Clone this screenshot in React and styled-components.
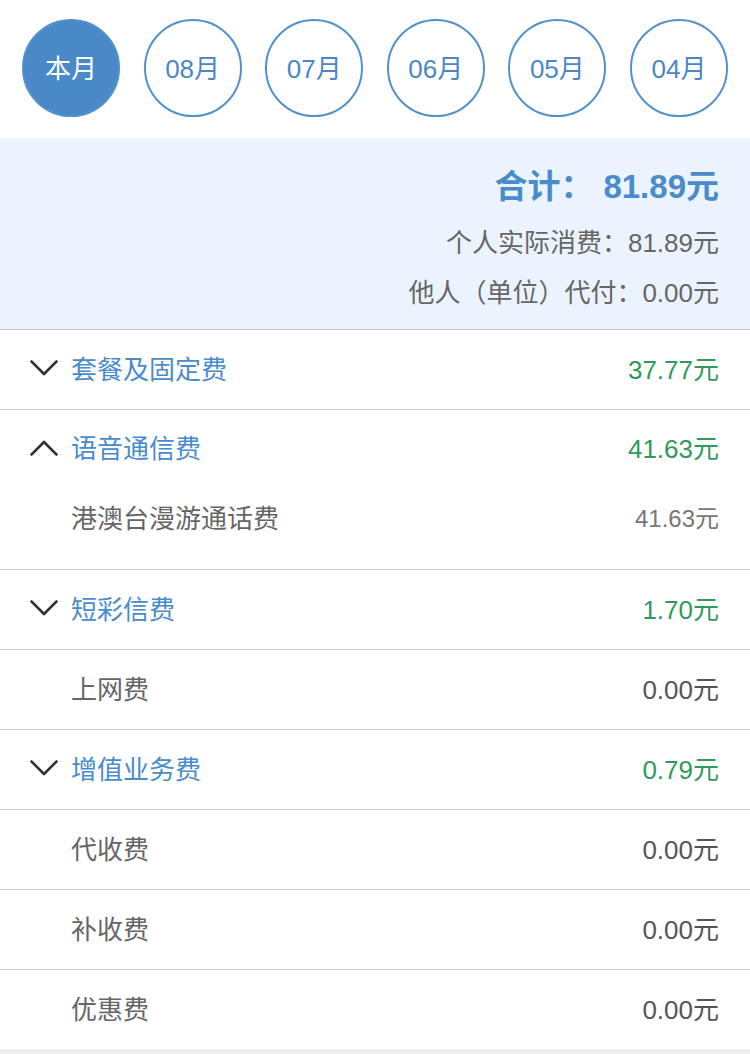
import React from "react";
import styled, { createGlobalStyle } from "styled-components";

const Global = createGlobalStyle`
  html, body { margin: 0; padding: 0; background: #efefef; }
  body { font-family: "Liberation Sans", "Noto Sans CJK SC", sans-serif; }
  * { box-sizing: border-box; }
`;

const Page = styled.div`
  width: 750px;
  background: #efefef;
`;

const MonthBar = styled.div`
  background: #fff;
  height: 138px;
  padding: 19px 22px 0 22px;
  display: flex;
  justify-content: space-between;
`;

const MonthCircle = styled.div`
  width: 98px;
  height: 98px;
  flex: 0 0 98px;
  border-radius: 50%;
  border: 2px solid #5291cc;
  background: ${(p) => (p.$active ? "#4a89c8" : "#fff")};
  color: ${(p) => (p.$active ? "#fff" : "#4a87c4")};
  display: flex;
  align-items: center;
  justify-content: center;
  font-size: 26px;
  padding-bottom: 3px;
`;

const Summary = styled.div`
  background: #ebf4fe;
  height: 192px;
  border-bottom: 1px solid #c9c9c9;
  padding: 26px 31px 0 0;
  display: flex;
  flex-direction: column;
  align-items: flex-end;
`;

const Total = styled.div`
  color: #4a8bcb;
  font-size: 33px;
  font-weight: bold;
  height: 46px;
  line-height: 46px;
`;

const Colon = styled.span`
  margin-right: 10px;
`;

const SumLine = styled.div`
  color: #666;
  font-size: 26px;
  height: 50px;
  line-height: 50px;
  margin-top: ${(p) => (p.$first ? "8px" : "0")};
`;

const List = styled.div`
  background: #fff;
`;

const Group = styled.div`
  border-bottom: ${(p) => (p.$last ? "none" : "1px solid #c9c9c9")};
`;

const HeaderRow = styled.div`
  height: ${(p) => (p.$open ? "78px" : "79px")};
  display: flex;
  align-items: center;
  padding: 0 31px 5px 30px;
`;

const Chevron = styled.svg`
  width: 28px;
  height: 16px;
  flex: 0 0 28px;
  margin-right: 13px;
  margin-top: 2px;
`;

const HeaderLabel = styled.div`
  flex: 1;
  color: #4a8bcb;
  font-size: 26px;
`;

const HeaderValue = styled.div`
  color: #2f9a5c;
  font-size: 26px;
`;

const SubList = styled.div`
  padding-bottom: 21px;
`;

const SubRow = styled.div`
  height: ${(p) => (p.$tall ? "79px" : "60px")};
  display: flex;
  align-items: center;
  padding: 0 31px ${(p) => (p.$tall ? "5px" : "3px")} 71px;
`;

const SubLabel = styled.div`
  flex: 1;
  color: #666;
  font-size: 26px;
`;

const SubValue = styled.div`
  color: ${(p) => (p.$dark ? "#555" : "#777")};
  font-size: ${(p) => (p.$dark ? "26px" : "24px")};
`;

const ChevronIcon = ({ up }) => (
  <Chevron viewBox="0 0 28 16">
    <polyline
      points={up ? "1.5,14.5 14,2 26.5,14.5" : "1.5,1.5 14,14 26.5,1.5"}
      fill="none"
      stroke="#333"
      strokeWidth="2.6"
      strokeLinecap="round"
      strokeLinejoin="round"
    />
  </Chevron>
);

const months = ["本月", "08月", "07月", "06月", "05月", "04月"];

const Header = ({ label, value, open }) => (
  <HeaderRow $open={open}>
    <ChevronIcon up={open} />
    <HeaderLabel>{label}</HeaderLabel>
    <HeaderValue>{value}</HeaderValue>
  </HeaderRow>
);

const Plain = ({ label, value, last }) => (
  <Group $last={last}>
    <SubRow $tall>
      <SubLabel>{label}</SubLabel>
      <SubValue $dark>{value}</SubValue>
    </SubRow>
  </Group>
);

export default function App() {
  return (
    <Page>
      <Global />
      <MonthBar>
        {months.map((m, i) => (
          <MonthCircle key={m} $active={i === 0}>
            {m}
          </MonthCircle>
        ))}
      </MonthBar>
      <Summary>
        <Total>
          合计<Colon>：</Colon>81.89元
        </Total>
        <SumLine $first>个人实际消费：81.89元</SumLine>
        <SumLine>他人（单位）代付：0.00元</SumLine>
      </Summary>
      <List>
        <Group>
          <Header label="套餐及固定费" value="37.77元" />
        </Group>
        <Group>
          <Header label="语音通信费" value="41.63元" open />
          <SubList>
            <SubRow>
              <SubLabel>港澳台漫游通话费</SubLabel>
              <SubValue>41.63元</SubValue>
            </SubRow>
          </SubList>
        </Group>
        <Group>
          <Header label="短彩信费" value="1.70元" />
        </Group>
        <Plain label="上网费" value="0.00元" />
        <Group>
          <Header label="增值业务费" value="0.79元" />
        </Group>
        <Plain label="代收费" value="0.00元" />
        <Plain label="补收费" value="0.00元" />
        <Plain label="优惠费" value="0.00元" last />
      </List>
    </Page>
  );
}
